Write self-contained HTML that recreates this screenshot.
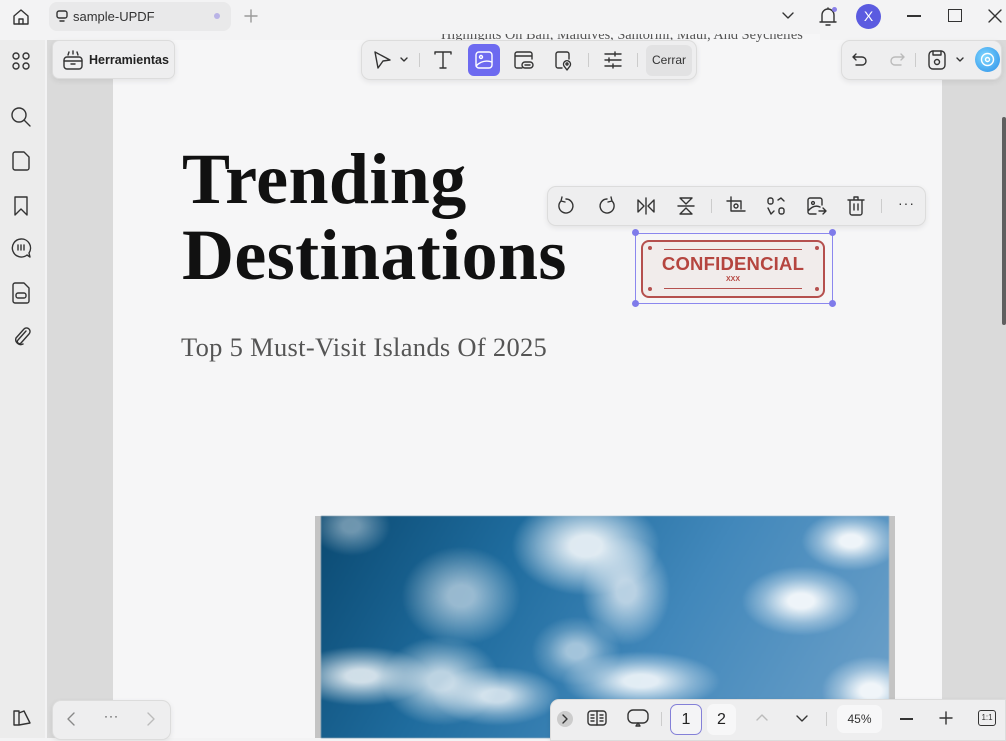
<!DOCTYPE html>
<html><head><meta charset="utf-8"><style>
*{box-sizing:border-box;margin:0;padding:0}
body{width:1006px;height:738px;overflow:hidden;position:relative;background:#f3f3f4;font-family:"Liberation Sans",sans-serif;color:#222}
.abs{position:absolute}
svg{position:absolute;fill:none;stroke:#333;stroke-width:1.4;stroke-linecap:round;stroke-linejoin:round}
.bar{position:absolute;background:#eeeeef;border:1px solid #dcdcdc;border-radius:9px;box-shadow:0 2px 6px rgba(0,0,0,.08)}
.sep{position:absolute;width:1px;height:14px;background:#ccc}
.cl{position:absolute;border-radius:50%}
</style></head><body>
<div class="abs" style="left:0;top:40px;width:45px;height:698px;background:#ececec"></div>
<div class="abs" style="left:47px;top:40px;width:66px;height:698px;background:#dadada"></div>
<div class="abs" style="left:113px;top:30px;width:829px;height:708px;background:#f6f6f7"></div>
<div class="abs" style="left:942px;top:40px;width:64px;height:698px;background:#dadada"></div>
<div class="abs" style="left:1002px;top:117px;width:4px;height:208px;background:#5f5f5f;border-radius:2px"></div>

<!-- top text clipped (under top bar) -->
<div class="abs" style="left:441px;top:28px;font-family:'Liberation Serif',serif;font-size:14.3px;color:#555;white-space:nowrap;line-height:15px">Highlights On Bali, Maldives, Santorini, Maui, And Seychelles</div>

<div class="abs" style="left:0;top:0;width:1006px;height:34px;background:#f3f3f4"></div>
<div class="abs" style="left:0;top:34px;width:441px;height:6px;background:#f3f3f4"></div>
<div class="abs" style="left:820px;top:34px;width:186px;height:6px;background:#f3f3f4"></div>
<svg style="left:11px;top:7px" width="20" height="20" viewBox="0 0 20 20"><path d="M3 9 L10 3 L17 9 V17 H3 Z"/><path d="M8 17 V12 H12 V17"/></svg>
<div class="abs" style="left:49px;top:2px;width:182px;height:29px;background:#e9e9ea;border-radius:8px"></div>
<svg style="left:56px;top:10px" width="12" height="12" viewBox="0 0 12 12"><rect x="1" y="1" width="10" height="7" rx="2"/><path d="M4 11 H8"/></svg>
<div class="abs" style="left:73px;top:9px;font-size:13px;color:#333">sample-UPDF</div>
<div class="abs" style="left:214px;top:13px;width:6px;height:6px;border-radius:50%;background:#b9b3e6"></div>
<svg style="left:244px;top:9px" width="14" height="14" viewBox="0 0 14 14"><path d="M7 1 V13 M1 7 H13" stroke="#999"/></svg>
<svg style="left:781px;top:11px" width="14" height="10" viewBox="0 0 14 10"><path d="M2 2 L7 7 L12 2"/></svg>
<svg style="left:818px;top:6px" width="20" height="22" viewBox="0 0 20 22"><path d="M4 16 V9 A6 6 0 0 1 16 9 V16 Z M2 16 H18 M8 19 H12 M10 2 V3"/></svg>
<div class="abs" style="left:832px;top:7px;width:5px;height:5px;border-radius:50%;background:#8a80e8"></div>
<div class="abs" style="left:856px;top:4px;width:25px;height:25px;border-radius:50%;background:#5b5be0;color:#fff;font-size:14px;text-align:center;line-height:25px">X</div>
<div class="abs" style="left:907px;top:15px;width:14px;height:1.5px;background:#333"></div>
<div class="abs" style="left:948px;top:9px;width:14px;height:13px;border:1.5px solid #333"></div>
<svg style="left:988px;top:9px" width="14" height="14" viewBox="0 0 14 14"><path d="M1 1 L13 13 M13 1 L1 13"/></svg>

<svg style="left:11px;top:51px" width="20" height="20" viewBox="0 0 20 20"><circle cx="5" cy="5" r="3"/><circle cx="15" cy="5" r="3"/><circle cx="5" cy="15" r="3"/><circle cx="15" cy="15" r="3"/></svg>
<svg style="left:10px;top:106px" width="22" height="22" viewBox="0 0 22 22"><circle cx="9" cy="9" r="7"/><path d="M14 14 L20 20"/></svg>
<svg style="left:12px;top:151px" width="18" height="20" viewBox="0 0 18 20"><path d="M3 1 H12 L17 6 V17 A2 2 0 0 1 15 19 H3 A2 2 0 0 1 1 17 V3 A2 2 0 0 1 3 1 Z"/></svg>
<svg style="left:13px;top:196px" width="16" height="20" viewBox="0 0 16 20"><path d="M2 1 H14 V19 L8 13 L2 19 Z"/></svg>
<svg style="left:10px;top:237px" width="22" height="22" viewBox="0 0 22 22"><path d="M11 2 A9 9 0 1 0 17 18 L20 20 L19 16 A9 9 0 0 0 11 2 Z M8 8 V13 M11 8 V13 M14 8 V13"/></svg>
<svg style="left:12px;top:282px" width="18" height="22" viewBox="0 0 18 22"><path d="M3 1 H12 L17 6 V19 A2 2 0 0 1 15 21 H3 A2 2 0 0 1 1 19 V3 A2 2 0 0 1 3 1 Z"/><rect x="4" y="11" width="10" height="5" rx="2"/></svg>
<svg style="left:12px;top:326px" width="20" height="20" viewBox="0 0 20 20"><path d="M14 5 L6 14 A2 2 0 0 0 9 17 L17 8 A3.5 3.5 0 0 0 12 3 L4 12 A5 5 0 0 0 11 18"/></svg>
<svg style="left:12px;top:709px" width="20" height="18" viewBox="0 0 20 18"><path d="M2 2 H7 V16 H2 Z M7 4 L12 2 L18 14 L7 16"/></svg>

<div class="bar" style="left:52px;top:40px;width:123px;height:39px;border-radius:7px"></div>
<svg style="left:62px;top:49px" width="22" height="22" viewBox="0 0 22 22"><rect x="2" y="8" width="18" height="12" rx="3"/><path d="M2 12 H20 M9 15 H13 M6 6 L7 3 M11 5 V2 M16 6 L15 3"/></svg>
<div class="abs" style="left:89px;top:53px;font-size:12.5px;font-weight:bold;color:#222">Herramientas</div>

<div class="bar" style="left:361px;top:40px;width:336px;height:40px"></div>
<svg style="left:372px;top:50px" width="20" height="20" viewBox="0 0 20 20"><path d="M3 2 L18 10 L11 11 L6 18 Z"/></svg>
<svg style="left:399px;top:56px" width="10" height="8" viewBox="0 0 10 8"><path d="M2 2 L5 5 L8 2"/></svg>
<div class="sep" style="left:419px;top:53px"></div>
<svg style="left:433px;top:50px" width="20" height="20" viewBox="0 0 20 20"><path d="M2 4 V2 H18 V4 M10 2 V18 M7 18 H13"/></svg>
<div class="abs" style="left:468px;top:44px;width:32px;height:32px;border-radius:6px;background:#6d6af0"></div>
<svg style="left:474px;top:50px;stroke:#fff" width="20" height="20" viewBox="0 0 20 20"><rect x="2" y="2" width="16" height="16" rx="3"/><circle cx="7" cy="7" r="1.5"/><path d="M2 16 Q9 9 18 12"/></svg>
<svg style="left:513px;top:49px" width="22" height="22" viewBox="0 0 22 22"><path d="M9 19 H4 A2 2 0 0 1 2 17 V5 A2 2 0 0 1 4 3 H17 A2 2 0 0 1 19 5 V10 M2 7 H19"/><rect x="9" y="13" width="11" height="6" rx="3"/><path d="M12 16 H17"/></svg>
<svg style="left:554px;top:49px" width="20" height="22" viewBox="0 0 20 22"><path d="M8 19 H4 A2 2 0 0 1 2 17 V5 A2 2 0 0 1 4 3 H13 A2 2 0 0 1 15 5 V10"/><path d="M13 21 L10 17 A3.5 3.5 0 1 1 16 17 Z"/><circle cx="13" cy="15" r="1"/></svg>
<div class="sep" style="left:588px;top:53px"></div>
<svg style="left:603px;top:50px" width="20" height="20" viewBox="0 0 20 20"><path d="M2 4 H18 M2 10 H18 M2 16 H18 M12 2 V6 M6 8 V12 M10 14 V18"/></svg>
<div class="sep" style="left:637px;top:53px"></div>
<div class="abs" style="left:646px;top:45px;width:46px;height:31px;border-radius:6px;background:#e2e2e3;font-size:12px;color:#333;text-align:center;line-height:31px">Cerrar</div>

<div class="bar" style="left:841px;top:40px;width:161px;height:40px"></div>
<svg style="left:851px;top:51px" width="18" height="18" viewBox="0 0 18 18"><path d="M5 3 L2 6 L5 9 M2 6 H11 A4 4 0 0 1 11 14 H5"/></svg>
<svg style="left:888px;top:51px;stroke:#bbb" width="18" height="18" viewBox="0 0 18 18"><path d="M13 3 L16 6 L13 9 M16 6 H7 A4 4 0 0 0 7 14 H13"/></svg>
<div class="sep" style="left:915px;top:53px"></div>
<svg style="left:927px;top:49px" width="20" height="22" viewBox="0 0 20 22"><rect x="2" y="2" width="16" height="18" rx="4"/><path d="M6 2 V6 H14 V2"/><circle cx="10" cy="13" r="2.5"/></svg>
<svg style="left:955px;top:56px" width="10" height="8" viewBox="0 0 10 8"><path d="M2 2 L5 5 L8 2"/></svg>
<div class="abs" style="left:975px;top:47px;width:25px;height:25px;border-radius:50%;background:radial-gradient(circle at 40% 40%,#7fd8ff,#2a8ee8)"></div>
<svg style="left:979px;top:51px;stroke:#fff" width="17" height="17" viewBox="0 0 17 17"><circle cx="8.5" cy="8.5" r="6"/><circle cx="8.5" cy="8.5" r="2"/></svg>

<div class="abs" style="left:182px;top:141px;font-family:'Liberation Serif',serif;font-weight:bold;font-size:72px;line-height:76px;color:#111;letter-spacing:0.4px;white-space:nowrap">Trending<br>Destinations</div>
<div class="abs" style="left:181px;top:332px;font-family:'Liberation Serif',serif;font-size:26.5px;letter-spacing:0.3px;color:#555;white-space:nowrap">Top 5 Must-Visit Islands Of 2025</div>

<div class="bar" style="left:547px;top:186px;width:379px;height:40px;background:#eeeeef"></div>
<svg style="left:556px;top:196px" width="20" height="20" viewBox="0 0 20 20"><path d="M5 5 A7 7 0 1 0 10 3 M6 1 L5 5 L9 6"/></svg>
<svg style="left:597px;top:196px" width="20" height="20" viewBox="0 0 20 20"><path d="M15 5 A7 7 0 1 1 10 3 M14 1 L15 5 L11 6"/></svg>
<svg style="left:636px;top:196px" width="20" height="20" viewBox="0 0 20 20"><path d="M2 4 L8 10 L2 16 Z M18 4 L12 10 L18 16 Z M10 2 V18"/></svg>
<svg style="left:676px;top:196px" width="20" height="20" viewBox="0 0 20 20"><path d="M4 2 H16 L10 8 Z M4 18 H16 L10 12 Z M2 10 H18"/></svg>
<div class="sep" style="left:711px;top:199px"></div>
<svg style="left:726px;top:196px" width="20" height="20" viewBox="0 0 20 20"><path d="M5 1 V15 H19 M1 5 H15 V13"/><circle cx="10" cy="10" r="2"/></svg>
<svg style="left:766px;top:196px" width="20" height="20" viewBox="0 0 20 20"><rect x="2" y="2" width="5" height="6" rx="2"/><rect x="13" y="12" width="5" height="6" rx="2"/><path d="M12 4 L15 2 L18 5 M2 12 L5 18 L8 15"/></svg>
<svg style="left:806px;top:196px" width="22" height="20" viewBox="0 0 22 20"><path d="M10 18 H4 A2 2 0 0 1 2 16 V4 A2 2 0 0 1 4 2 H14 A2 2 0 0 1 16 4 V9 M2 15 Q8 8 14 11 M13 15 H20 M17 12 L20 15 L17 18"/><circle cx="7" cy="7" r="1.4"/></svg>
<svg style="left:846px;top:195px" width="20" height="22" viewBox="0 0 20 22"><path d="M2 5 H18 M8 5 V2 H12 V5 M4 5 V18 A2 2 0 0 0 6 20 H14 A2 2 0 0 0 16 18 V5 M8 9 V15 M12 9 V15"/></svg>
<div class="sep" style="left:881px;top:199px"></div>
<div class="abs" style="left:898px;top:195px;font-size:14px;color:#333;letter-spacing:1px">···</div>

<div class="abs" style="left:635px;top:233px;width:198px;height:71px;border:1.3px solid #8b87ee"></div>
<div class="abs" style="left:641px;top:240px;width:184px;height:58px;background:#f1eceb;border:2.5px solid #b5504e;border-radius:8px"></div>
<div class="abs" style="left:664px;top:249px;width:138px;height:1px;background:#b5504e"></div>
<div class="abs" style="left:664px;top:288px;width:138px;height:1px;background:#b5504e"></div>
<div class="abs" style="left:648px;top:246px;width:4px;height:4px;border-radius:50%;background:#b5504e"></div>
<div class="abs" style="left:815px;top:246px;width:4px;height:4px;border-radius:50%;background:#b5504e"></div>
<div class="abs" style="left:648px;top:287px;width:4px;height:4px;border-radius:50%;background:#b5504e"></div>
<div class="abs" style="left:815px;top:287px;width:4px;height:4px;border-radius:50%;background:#b5504e"></div>
<div class="abs" style="left:641px;top:253px;width:184px;text-align:center;font-size:18.5px;font-weight:bold;color:#b5453f;letter-spacing:0.2px">CONFIDENCIAL</div>
<div class="abs" style="left:641px;top:276px;width:184px;text-align:center;font-size:7px;font-weight:bold;color:#b5453f">XXX</div>
<div class="abs" style="left:632px;top:229px;width:7px;height:7px;border-radius:50%;background:#7f7bea"></div>
<div class="abs" style="left:829px;top:229px;width:7px;height:7px;border-radius:50%;background:#7f7bea"></div>
<div class="abs" style="left:632px;top:300px;width:7px;height:7px;border-radius:50%;background:#7f7bea"></div>
<div class="abs" style="left:829px;top:300px;width:7px;height:7px;border-radius:50%;background:#7f7bea"></div>

<div class="abs" style="left:315px;top:516px;width:580px;height:222px;background:#c4c4c4"></div>
<div class="abs" style="left:321px;top:516px;width:568px;height:222px;overflow:hidden;background:linear-gradient(120deg,#0b4a72 0%,#1f6c9e 30%,#4288bb 60%,#6fa2ca 100%);filter:blur(0.5px)">
<div class="cl" style="left:190px;top:-20px;width:150px;height:100px;background:radial-gradient(ellipse,rgba(255,255,255,.85) 15%,rgba(230,240,248,.45) 45%,rgba(255,255,255,0) 70%)"></div>
<div class="cl" style="left:260px;top:20px;width:90px;height:110px;background:radial-gradient(ellipse,rgba(240,244,248,.7) 15%,rgba(255,255,255,.3) 45%,rgba(255,255,255,0) 70%)"></div>
<div class="cl" style="left:80px;top:30px;width:120px;height:100px;background:radial-gradient(ellipse,rgba(235,240,245,.6) 15%,rgba(255,255,255,.25) 45%,rgba(255,255,255,0) 70%)"></div>
<div class="cl" style="left:-30px;top:130px;width:140px;height:60px;background:radial-gradient(ellipse,rgba(255,255,255,.8) 15%,rgba(255,255,255,.35) 45%,rgba(255,255,255,0) 70%)"></div>
<div class="cl" style="left:60px;top:120px;width:120px;height:90px;background:radial-gradient(ellipse,rgba(255,255,255,.7) 15%,rgba(255,255,255,.3) 45%,rgba(255,255,255,0) 70%)"></div>
<div class="cl" style="left:110px;top:150px;width:130px;height:60px;background:radial-gradient(ellipse,rgba(255,255,255,.75) 15%,rgba(255,255,255,.3) 45%,rgba(255,255,255,0) 70%)"></div>
<div class="cl" style="left:210px;top:100px;width:90px;height:70px;background:radial-gradient(ellipse,rgba(255,255,255,.55) 15%,rgba(255,255,255,.2) 45%,rgba(255,255,255,0) 70%)"></div>
<div class="cl" style="left:240px;top:135px;width:160px;height:60px;background:radial-gradient(ellipse,rgba(255,255,255,.85) 15%,rgba(255,255,255,.35) 45%,rgba(255,255,255,0) 70%)"></div>
<div class="cl" style="left:420px;top:50px;width:120px;height:70px;background:radial-gradient(ellipse,rgba(255,255,255,.9) 15%,rgba(255,255,255,.35) 45%,rgba(255,255,255,0) 70%)"></div>
<div class="cl" style="left:480px;top:-5px;width:100px;height:60px;background:radial-gradient(ellipse,rgba(255,255,255,.9) 15%,rgba(255,255,255,.35) 45%,rgba(255,255,255,0) 70%)"></div>
<div class="cl" style="left:500px;top:140px;width:100px;height:70px;background:radial-gradient(ellipse,rgba(255,255,255,.9) 15%,rgba(255,255,255,.35) 45%,rgba(255,255,255,0) 70%)"></div>
<div class="cl" style="left:-10px;top:-20px;width:80px;height:60px;background:radial-gradient(ellipse,rgba(255,255,255,.4) 15%,rgba(255,255,255,0) 70%)"></div>
</div>

<div class="bar" style="left:52px;top:700px;width:119px;height:40px"></div>
<svg style="left:65px;top:711px;stroke:#888" width="12" height="16" viewBox="0 0 12 16"><path d="M9 2 L3 8 L9 14"/></svg>
<div class="abs" style="left:104px;top:709px;font-size:12px;color:#333;letter-spacing:1px">···</div>
<svg style="left:145px;top:711px;stroke:#bbb" width="12" height="16" viewBox="0 0 12 16"><path d="M3 2 L9 8 L3 14"/></svg>

<div class="bar" style="left:550px;top:699px;width:456px;height:42px;border-radius:9px 0 0 0"></div>
<div class="abs" style="left:557px;top:711px;width:16px;height:16px;border-radius:50%;background:#ccc"></div>
<svg style="left:561px;top:714px" width="8" height="10" viewBox="0 0 8 10"><path d="M2 1 L6 5 L2 9"/></svg>
<svg style="left:586px;top:709px" width="22" height="18" viewBox="0 0 22 18"><rect x="2" y="2" width="18" height="14" rx="3"/><path d="M11 2 V16 M5 6 H8 M5 9 H8 M5 12 H8 M14 6 H17 M14 9 H17 M14 12 H17"/></svg>
<svg style="left:626px;top:708px" width="24" height="20" viewBox="0 0 24 20"><rect x="2" y="2" width="20" height="13" rx="5"/><path d="M12 15 L10 18 H14 Z"/></svg>
<div class="sep" style="left:661px;top:712px"></div>
<div class="abs" style="left:670px;top:704px;width:32px;height:31px;border:1px solid #8480d8;border-radius:7px;background:#f4f4f6;font-size:16px;text-align:center;line-height:29px;color:#222">1</div>
<div class="abs" style="left:707px;top:704px;width:29px;height:31px;border-radius:7px;background:#f7f7f8;font-size:16px;text-align:center;line-height:31px;color:#222">2</div>
<svg style="left:755px;top:713px;stroke:#bbb" width="14" height="10" viewBox="0 0 14 10"><path d="M2 7 L7 2 L12 7"/></svg>
<svg style="left:795px;top:714px" width="14" height="10" viewBox="0 0 14 10"><path d="M2 2 L7 7 L12 2"/></svg>
<div class="sep" style="left:826px;top:712px"></div>
<div class="abs" style="left:837px;top:705px;width:45px;height:28px;border-radius:7px;background:#f7f7f8;font-size:12px;text-align:center;line-height:28px;color:#333">45%</div>
<div class="abs" style="left:900px;top:718px;width:13px;height:1.5px;background:#333"></div>
<svg style="left:939px;top:711px" width="14" height="14" viewBox="0 0 14 14"><path d="M7 1 V13 M1 7 H13"/></svg>
<div class="abs" style="left:978px;top:710px;width:18px;height:16px;border:1.3px solid #333;border-radius:3px;font-size:8px;text-align:center;line-height:14px;color:#333">1:1</div>
</body></html>
